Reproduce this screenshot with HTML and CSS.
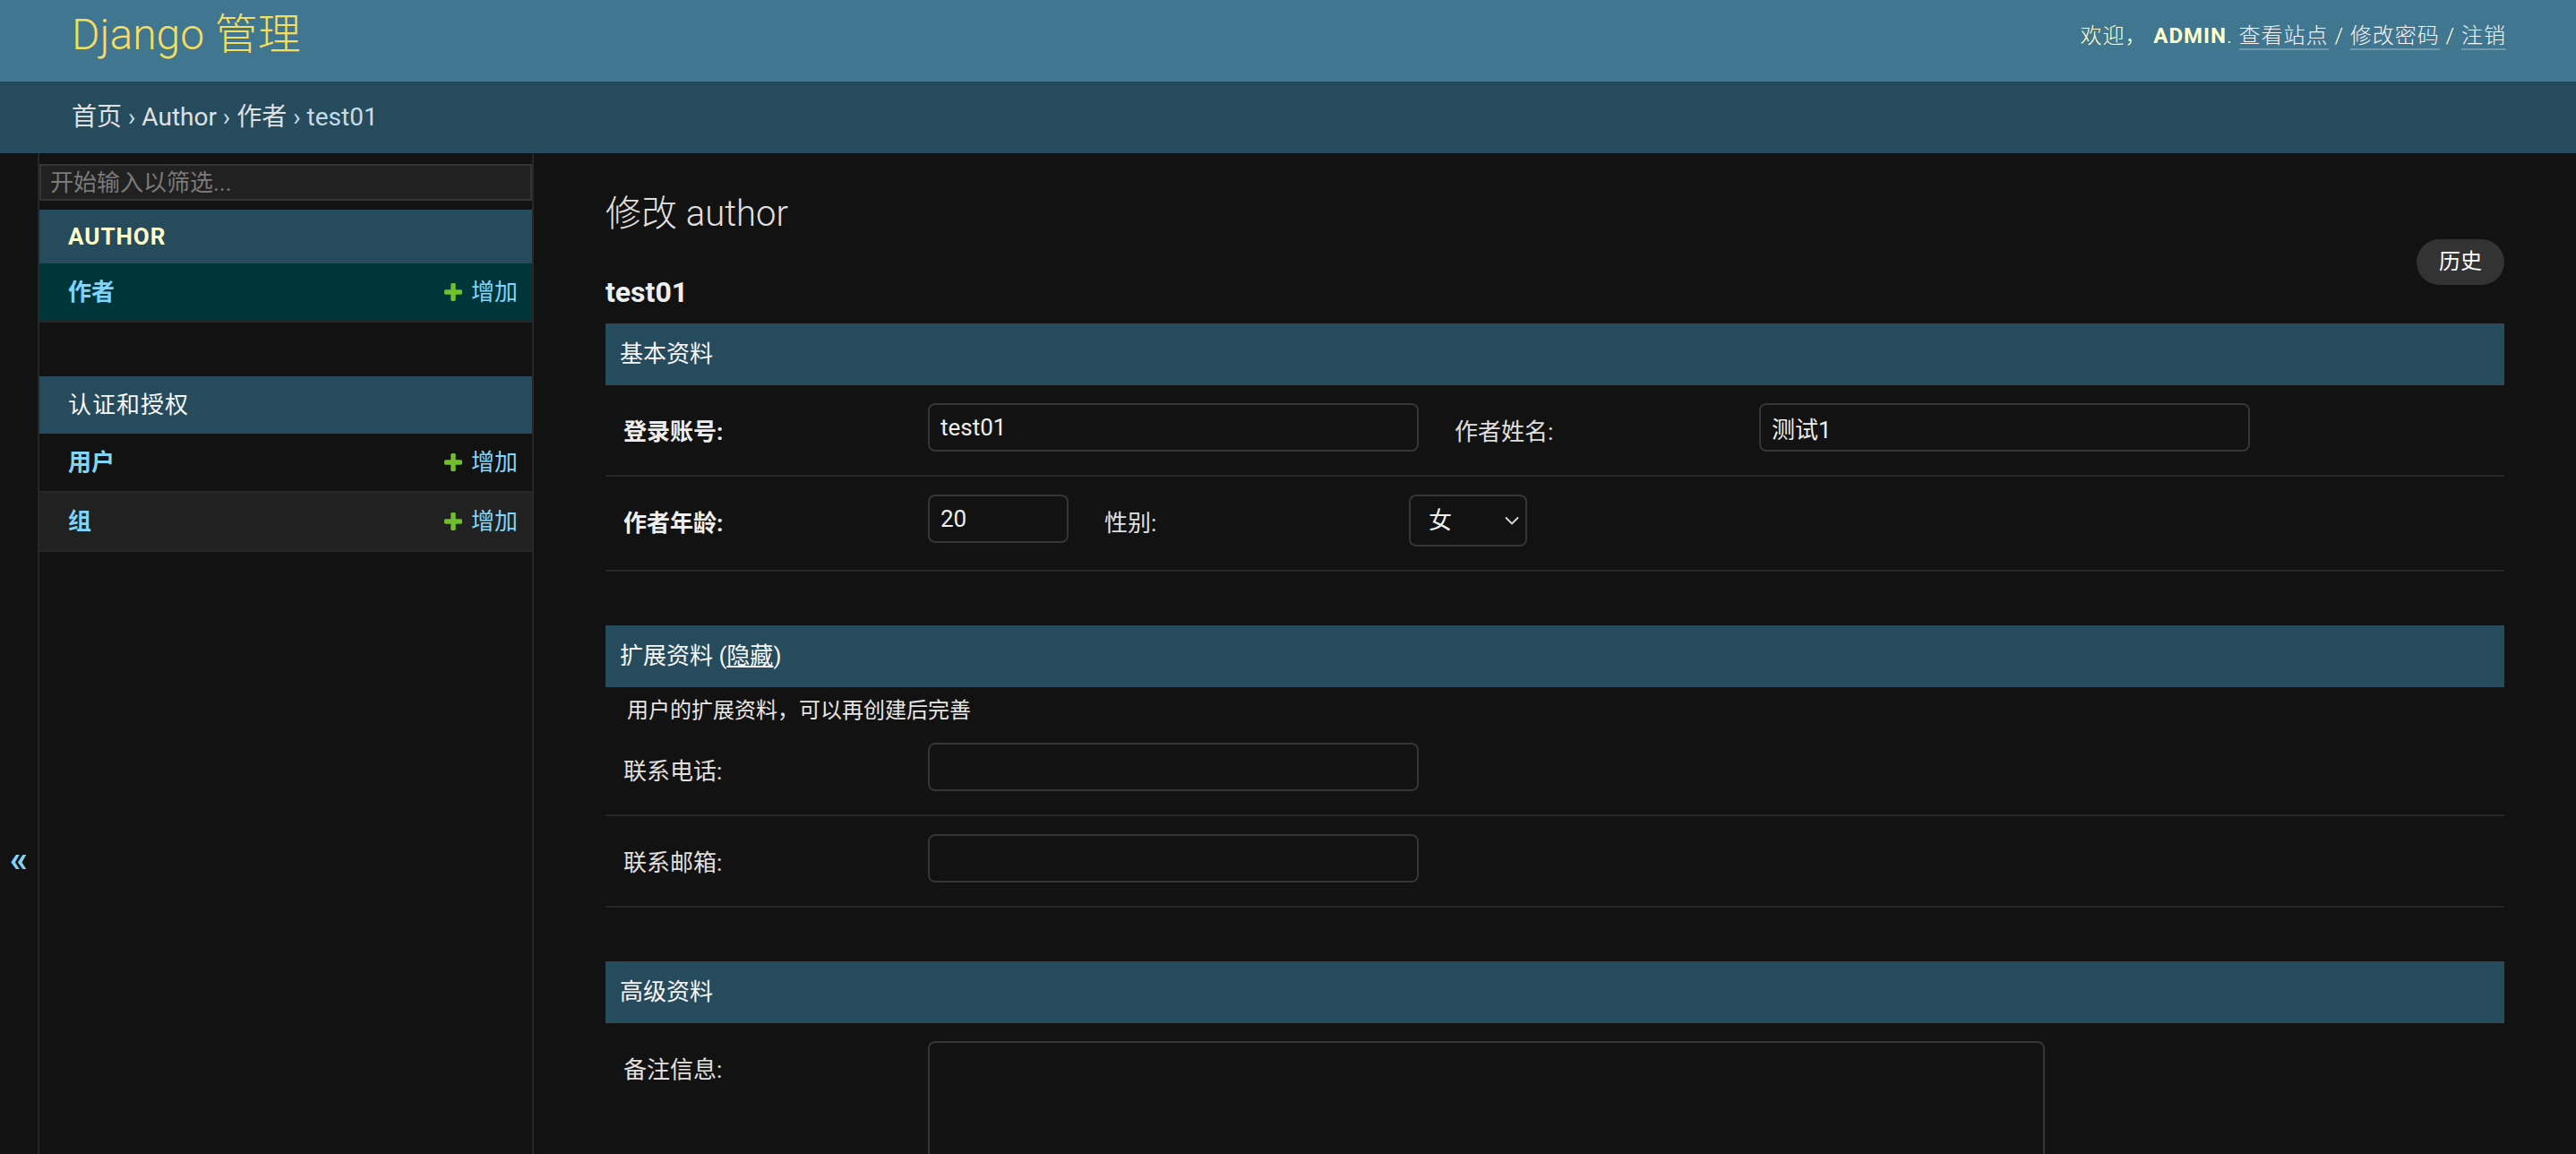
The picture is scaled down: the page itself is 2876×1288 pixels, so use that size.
FILE: index.html
```html
<!DOCTYPE html>
<html lang="zh-CN">
<head>
<meta charset="utf-8">
<title>修改 author | Django 站点管理员</title>
<link rel="stylesheet" href="styles.css">
</head>
<body>
<header class="header">
  <h1 class="site-name"><a href="#">Django 管理</a></h1>
  <div class="user-tools">欢迎， <strong>admin</strong>. <a href="#">查看站点</a> / <a href="#">修改密码</a> / <a href="#">注销</a></div>
</header>
<nav class="breadcrumbs"><a href="#">首页</a> › <a href="#">Author</a> › <a href="#">作者</a> › test01</nav>
<div class="main">
  <div class="toggle"><span class="toggle-glyph">«</span></div>
  <nav class="sidebar">
    <input class="nav-filter" type="search" placeholder="开始输入以筛选...">
    <div class="nav-module current-app">
      <div class="caption"><a href="#">Author</a></div>
      <div class="model-row current-model">
        <a class="model-name" href="#">作者</a>
        <a class="addlink" href="#"><svg viewBox="192 128 1408 1408"><path fill="#70bf2b" d="M1600 736v192q0 40-28 68t-68 28h-416v416q0 40-28 68t-68 28h-192q-40 0-68-28t-28-68v-416h-416q-40 0-68-28t-28-68v-192q0-40 28-68t68-28h416v-416q0-40 28-68t68-28h192q40 0 68 28t28 68v416h416q40 0 68 28t28 68z"/></svg>增加</a>
      </div>
    </div>
    <div class="nav-module">
      <div class="caption cjk"><a href="#">认证和授权</a></div>
      <div class="model-row">
        <a class="model-name" href="#">用户</a>
        <a class="addlink" href="#"><svg viewBox="192 128 1408 1408"><path fill="#70bf2b" d="M1600 736v192q0 40-28 68t-68 28h-416v416q0 40-28 68t-68 28h-192q-40 0-68-28t-28-68v-416h-416q-40 0-68-28t-28-68v-192q0-40 28-68t68-28h416v-416q0-40 28-68t68-28h192q40 0 68 28t28 68v416h416q40 0 68 28t28 68z"/></svg>增加</a>
      </div>
      <div class="model-row alt">
        <a class="model-name" href="#">组</a>
        <a class="addlink" href="#"><svg viewBox="192 128 1408 1408"><path fill="#70bf2b" d="M1600 736v192q0 40-28 68t-68 28h-416v416q0 40-28 68t-68 28h-192q-40 0-68-28t-28-68v-416h-416q-40 0-68-28t-28-68v-192q0-40 28-68t68-28h416v-416q0-40 28-68t68-28h192q40 0 68 28t28 68v416h416q40 0 68 28t28 68z"/></svg>增加</a>
      </div>
    </div>
  </nav>
  <main class="content">
    <h1 class="page-title">修改 author</h1>
    <ul class="object-tools"><li><a href="#">历史</a></li></ul>
    <h2 class="subtitle">test01</h2>

    <fieldset class="module">
      <h2 class="fs-heading">基本资料</h2>
      <div class="form-row">
        <div class="field-box">
          <label class="required">登录账号:</label>
          <input class="text" type="text" value="test01">
        </div>
        <div class="field-box">
          <label>作者姓名:</label>
          <input class="text" type="text" value="测试1">
        </div>
      </div>
      <div class="form-row">
        <div class="field-box">
          <label class="required">作者年龄:</label>
          <input class="text int" type="text" value="20">
        </div>
        <div class="field-box">
          <label>性别:</label>
          <div class="select-wrap">
            <select><option>女</option><option>男</option></select>
            <svg class="chev" viewBox="0 0 16 10"><path d="M1 1.5 L8 8.5 L15 1.5" fill="none" stroke="#dddddd" stroke-width="1.8"/></svg>
          </div>
        </div>
      </div>
    </fieldset>

    <fieldset class="module">
      <h2 class="fs-heading">扩展资料 (<a href="#">隐藏</a>)</h2>
      <p class="description">用户的扩展资料，可以再创建后完善</p>
      <div class="form-row">
        <div class="field-box">
          <label>联系电话:</label>
          <input class="text" type="text" value="">
        </div>
      </div>
      <div class="form-row">
        <div class="field-box">
          <label>联系邮箱:</label>
          <input class="text" type="text" value="">
        </div>
      </div>
    </fieldset>

    <fieldset class="module">
      <h2 class="fs-heading">高级资料</h2>
      <div class="form-row">
        <div class="field-box">
          <label>备注信息:</label>
          <textarea class="large"></textarea>
        </div>
      </div>
    </fieldset>
  </main>
</div>
</body>
</html>
```
FILE: styles.css
```css
* { box-sizing: border-box; }
html, body { margin: 0; padding: 0; }
body {
  background: #121212;
  color: #eeeeee;
  font-family: Roboto, "Noto Sans CJK SC", sans-serif;
  font-size: 28px;
}
a { color: #81d4fa; text-decoration: none; }

/* header */
.header {
  display: flex;
  justify-content: space-between;
  align-items: flex-start;
  height: 91px;
  padding: 0 78px 0 80px;
  background: #417690;
}
.site-name {
  margin: 11px 0 0;
  font-size: 48px;
  line-height: 56px;
  font-weight: 300;
}
.site-name a { color: #f5dd5d; }
.user-tools {
  margin-top: 25px;
  font-size: 24px;
  line-height: 30px;
  font-weight: 300;
  letter-spacing: 1px;
  text-transform: uppercase;
  color: #ffffcc;
}
.user-tools strong { font-weight: 700; }
.user-tools a {
  color: #f7f7f7;
  border-bottom: 2px solid rgba(255, 255, 255, 0.25);
}

/* breadcrumbs */
.breadcrumbs {
  height: 80px;
  padding: 20px 80px;
  font-size: 28px;
  line-height: 40px;
  background: #264b5d;
  color: #c4dce8;
}
.breadcrumbs a { color: #e0e0e0; }

/* main */
.main {
  display: flex;
  min-height: 1117px;
}
.toggle {
  flex: 0 0 44px;
  display: flex;
  justify-content: center;
  align-items: flex-start;
  padding-top: 765px;
  border-right: 2px solid #272727;
}
.toggle-glyph {
  font-size: 40px;
  line-height: 48px;
  font-weight: 700;
  color: #81d4fa;
}

/* sidebar */
.sidebar {
  flex: 0 0 552px;
  border-top: 2px solid transparent;
  border-right: 2px solid #272727;
}
.nav-filter {
  display: block;
  width: 100%;
  height: 41px;
  margin: 10px 0;
  padding: 4px 10px;
  border: 2px solid #353535;
  border-radius: 0;
  background: #212121;
  color: #eeeeee;
  font-family: Roboto, "Noto Sans CJK SC", sans-serif;
  font-size: 26px;
  line-height: 29px;
  outline: none;
  -webkit-appearance: none;
  appearance: none;
}
.nav-filter::placeholder { color: #7a7a7a; }
.nav-module { margin-bottom: 60px; }
.caption {
  padding: 16px 32px;
  background: #264b5d;
  font-size: 26px;
  line-height: 28px;
  letter-spacing: 1px;
  text-transform: uppercase;
}
.caption.cjk { line-height: 32px; }
.caption a { color: #f7f7f7; }
.current-app .caption a { color: #ffffcc; font-weight: 700; }
.model-row {
  display: flex;
  justify-content: space-between;
  align-items: center;
  height: 66px;
  padding: 0 16px 0 32px;
  border-bottom: 2px solid #272727;
  font-size: 26px;
  line-height: 32px;
}
.model-name { font-weight: 700; }
.current-model { background: #00363a; }
.model-row.alt { background: #212121; }
.addlink {
  display: flex;
  align-items: center;
  gap: 10px;
}
.addlink svg { width: 20px; height: 20px; display: block; }

/* content */
.content {
  flex: 1;
  min-width: 0;
  padding: 40px 80px;
}
.page-title {
  margin: 4px 0 0;
  font-size: 40px;
  line-height: 48px;
  font-weight: 300;
  color: #e0e0e0;
}
.object-tools {
  float: right;
  margin: 4px 0 0;
  padding: 0;
  list-style: none;
}
.object-tools a {
  display: block;
  height: 51px;
  padding: 0 25px;
  border-radius: 26px;
  background: #333333;
  color: #ffffff;
  font-size: 24px;
  line-height: 51px;
}
.subtitle {
  margin: 43px 0 15px;
  font-size: 32px;
  line-height: 40px;
  font-weight: 700;
  color: #eeeeee;
}
fieldset.module {
  margin: 0 0 60px;
  padding: 0;
  border: 0;
  min-width: 0;
}
.fs-heading {
  margin: 0;
  height: 69px;
  padding: 16px;
  background: #264b5d;
  color: #f7f7f7;
  font-size: 26px;
  line-height: 37px;
  font-weight: 400;
}
.fs-heading a { color: #f7f7f7; text-decoration: underline; }
.description {
  margin: 0;
  padding: 10px 0 0 24px;
  font-size: 24px;
  line-height: 32px;
  color: #e6e6e6;
}
.form-row {
  display: flex;
  align-items: flex-start;
  padding: 20px 20px 26px;
  border-bottom: 2px solid #272727;
}
.field-box {
  display: flex;
  align-items: flex-start;
  margin-right: 40px;
}
.field-box label {
  width: 340px;
  padding: 14px 20px 0 0;
  font-size: 26px;
  line-height: 36px;
  color: #e0e0e0;
}
.field-box label.required { font-weight: 700; color: #eeeeee; }
input.text, select, textarea {
  font-family: Roboto, "Noto Sans CJK SC", sans-serif;
  font-size: 26px;
  color: #eeeeee;
  background: #121212;
  border: 2px solid #353535;
  border-radius: 8px;
  outline: none;
}
input.text {
  width: 548px;
  height: 54px;
  padding: 10px 12px;
  line-height: 30px;
}
input.int { width: 157px; }
.select-wrap {
  position: relative;
  width: 132px;
  height: 58px;
}
select {
  -webkit-appearance: none;
  appearance: none;
  width: 132px;
  height: 58px;
  padding: 0 40px 0 20px;
}
.chev {
  position: absolute;
  right: 9px;
  top: 24px;
  width: 16px;
  height: 10px;
  pointer-events: none;
}
textarea.large {
  display: block;
  width: 1247px;
  height: 340px;
  padding: 10px 12px;
  resize: vertical;
}
```
